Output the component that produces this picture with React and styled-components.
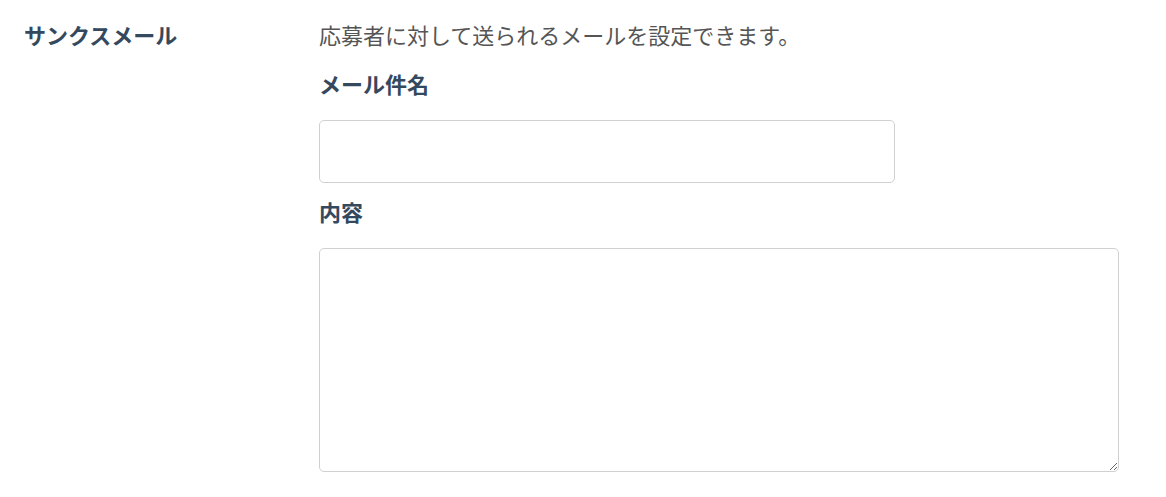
import styled, { createGlobalStyle } from 'styled-components';

const GlobalStyle = createGlobalStyle`
  body {
    margin: 0;
    background: #fff;
    font-family: "Noto Sans CJK JP", "Noto Sans", sans-serif;
  }
`;

const SettingRow = styled.div`
  display: flex;
  padding: 18px 0 0 24px;
`;
const RowTitle = styled.div`
  width: 295px;
  flex-shrink: 0;
  font-size: 22px;
  line-height: 33px;
  font-weight: 700;
  color: #34495e;
`;
const FieldColumn = styled.div`
  display: flex;
  flex-direction: column;
  gap: 16px;
`;
const Description = styled.p`
  margin: 0;
  font-size: 22px;
  line-height: 33px;
  color: #555;
`;
const FieldLabel = styled.label`
  margin-bottom: 4px;
  font-size: 22px;
  line-height: 33px;
  font-weight: 700;
  color: #34495e;
`;
const TextInput = styled.input`
  box-sizing: border-box;
  width: 576px;
  height: 63px;
  margin-bottom: -4px;
  border: 1px solid #d0d0d0;
  border-radius: 5px;
  padding: 0 12px;
  font-size: 18px;
  font-family: inherit;
  outline: none;
`;
const TextArea = styled.textarea`
  box-sizing: border-box;
  width: 800px;
  height: 224px;
  border: 1px solid #d0d0d0;
  border-radius: 5px;
  padding: 10px 12px;
  font-size: 18px;
  font-family: inherit;
  outline: none;
  display: block;
`;

export default function App() {
  return (
    <>
      <GlobalStyle />
      <SettingRow>
        <RowTitle>サンクスメール</RowTitle>
        <FieldColumn>
          <Description>応募者に対して送られるメールを設定できます。</Description>
          <FieldLabel>メール件名</FieldLabel>
          <TextInput type="text" />
          <FieldLabel>内容</FieldLabel>
          <TextArea />
        </FieldColumn>
      </SettingRow>
    </>
  );
}
